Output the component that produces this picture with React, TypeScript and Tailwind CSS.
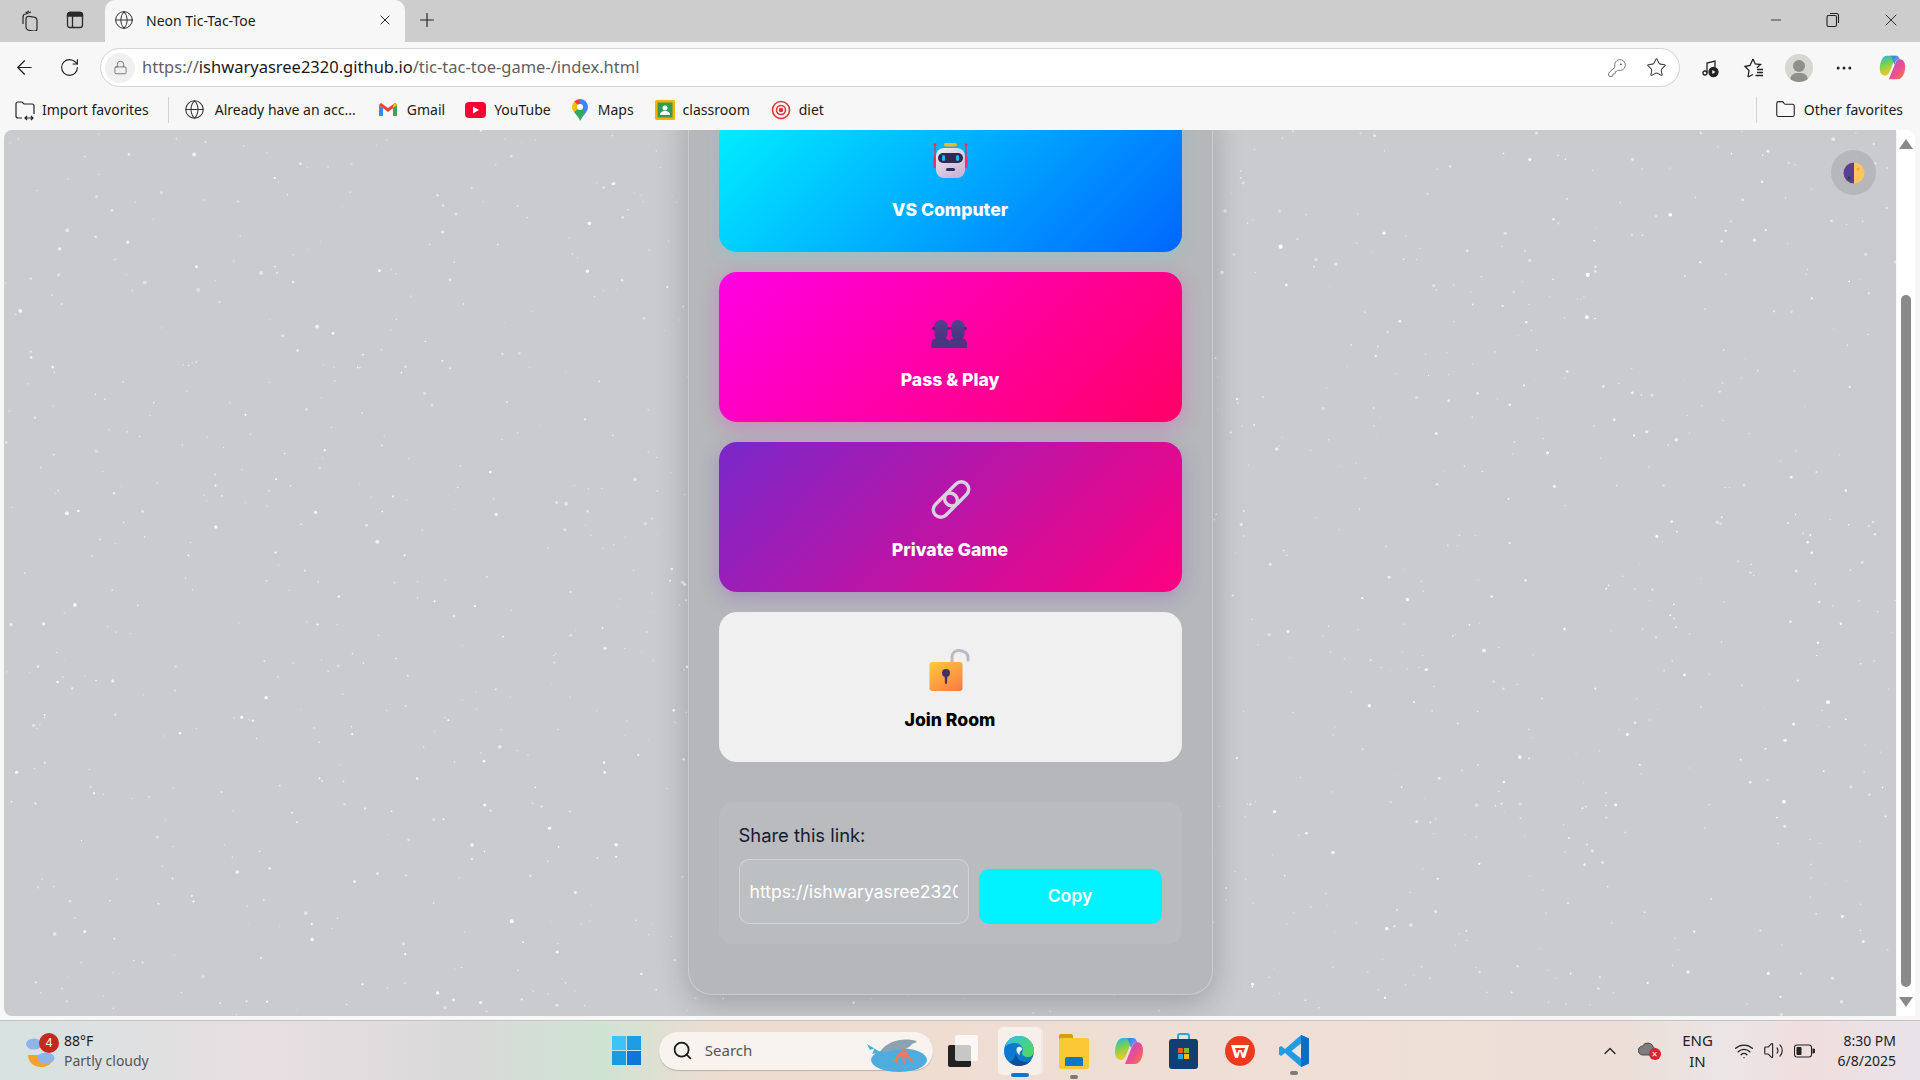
import { ArrowLeft, Globe, Lock, Minus, MoreHorizontal, Plus, RotateCw, Search, Star, X, ChevronUp, Wifi, Volume2, KeyRound, Folder } from 'lucide-react';

const CHROME_FONT = 'font-["Noto_Sans",sans-serif]';

// seeded so the speckles stay put between runs
const makeStars = (count: number) => {
  let seed = 4242;
  const rand = () => {
    seed = (seed * 16807) % 2147483647;
    return seed / 2147483647;
  };
  return Array.from({ length: count }, () => ({
    x: rand() * 1892,
    y: rand() * 890,
    r: 0.5 + rand() * rand() * 1.7,
    o: 0.35 + rand() * 0.65,
  }));
};

const stars = makeStars(1500);

function StarField() {
  return (
    <svg className="absolute inset-0 h-full w-full" viewBox="0 0 1892 890" preserveAspectRatio="none">
      {stars.map((s, i) => (
        <circle key={i} cx={s.x} cy={s.y} r={s.r} fill="#ffffff" opacity={s.o} />
      ))}
    </svg>
  );
}

function RobotIcon() {
  return (
    <svg width="48" height="48" viewBox="0 0 48 48">
      <defs>
        <linearGradient id="rb" x1="0" y1="0" x2="0.6" y2="1">
          <stop offset="0" stopColor="#f0edf2" />
          <stop offset="1" stopColor="#cbb6d6" />
        </linearGradient>
      </defs>
      <rect x="18" y="5" width="13" height="3.500" rx="1.700" fill="#f9b91e" />
      <line x1="9" y1="7" x2="9" y2="20" stroke="#e8265e" strokeWidth="1.200" />
      <line x1="40" y1="7" x2="40" y2="20" stroke="#e8265e" strokeWidth="1.200" />
      <circle cx="9" cy="6.500" r="1.600" fill="#f0305f" />
      <circle cx="40" cy="6.500" r="1.600" fill="#f0305f" />
      <rect x="7.500" y="18" width="3.500" height="12" rx="1.500" fill="#f0306a" />
      <rect x="38" y="18" width="3.500" height="12" rx="1.500" fill="#f0306a" />
      <rect x="10" y="10" width="29" height="30" rx="8" fill="url(#rb)" />
      <rect x="12" y="15" width="25" height="10" rx="5" fill="#2f2a55" />
      <rect x="16" y="17" width="3" height="6" rx="1.500" fill="#1fb6f5" />
      <rect x="30" y="17" width="3" height="6" rx="1.500" fill="#1fb6f5" />
      <rect x="20" y="30" width="9" height="3" rx="1.500" fill="#342c58" />
    </svg>
  );
}

function PeopleIcon() {
  return (
    <svg width="48" height="48" viewBox="0 0 48 48">
      <defs>
        <linearGradient id="pp" x1="0" y1="0" x2="0" y2="1">
          <stop offset="0" stopColor="#54408e" />
          <stop offset="1" stopColor="#47337e" />
        </linearGradient>
      </defs>
      <circle cx="8" cy="20.500" r="1.700" fill="#3e2a6e" />
      <circle cx="39" cy="20.500" r="1.700" fill="#3e2a6e" />
      <circle cx="22.500" cy="20.500" r="1.400" fill="#3e2a6e" />
      <circle cx="25.500" cy="20.500" r="1.400" fill="#3e2a6e" />
      <path d="M5.500 40v-4.500c0-3.500 3-5.500 6-5.500h6c3 0 5.500 1.500 6 4 .5-2.500 3-4 6-4h5.500c3 0 6 2 6 5.500V40z" fill="#4a3580" />
      <rect x="8.500" y="12" width="13" height="20" rx="6" fill="url(#pp)" />
      <rect x="25.500" y="12" width="13" height="20" rx="6" fill="url(#pp)" />
    </svg>
  );
}

function ChainIcon() {
  return (
    <svg width="48" height="48" viewBox="0 0 48 48">
      <g transform="translate(25 21.500) rotate(-45)" fill="none" stroke="#d8d2df" strokeWidth="3.400">
        <rect x="-22" y="-7.500" width="28" height="15" rx="7.500" />
        <rect x="-6" y="-7.500" width="28" height="15" rx="7.500" />
      </g>
    </svg>
  );
}

function LockIcon() {
  return (
    <svg width="48" height="48" viewBox="0 0 48 48">
      <defs>
        <linearGradient id="lk" x1="0.1" y1="0" x2="0.8" y2="1">
          <stop offset="0" stopColor="#fec83c" />
          <stop offset="1" stopColor="#fb7f45" />
        </linearGradient>
      </defs>
      <path d="M26 15V9c0-4 3-6.500 7-6.500s9 2.500 9 6.500v3" fill="none" stroke="#bdb8c6" strokeWidth="3" strokeLinecap="round" />
      <rect x="3.500" y="14" width="33" height="29" rx="3" fill="url(#lk)" />
      <circle cx="20" cy="25" r="4" fill="#3f3162" />
      <path d="M18.500 26h3l-0.500 9a1 1 0 0 1-2 0z" fill="#3f3162" />
    </svg>
  );
}

function ModeButton({ label, icon, className }: { label: string; icon: React.ReactNode; className: string }) {
  return (
    <button className={`flex h-[150px] w-full shrink-0 flex-col items-center gap-2.5 rounded-[18px] pt-9 ${className}`}>
      {icon}
      <span className='text-[17.600px] leading-[27px] font-extrabold font-["Inter",sans-serif]'>{label}</span>
    </button>
  );
}

function CopilotIcon({ size }: { size: number }) {
  return (
    <svg width={size} height={size} viewBox="0 0 32 32">
      <defs>
        <linearGradient id={`c1${size}`} x1="0" y1="0" x2="0.3" y2="1">
          <stop offset="0" stopColor="#1fb4ee" />
          <stop offset="0.5" stopColor="#7ed24a" />
          <stop offset="1" stopColor="#f5c52c" />
        </linearGradient>
        <linearGradient id={`c2${size}`} x1="0" y1="0" x2="1" y2="1">
          <stop offset="0" stopColor="#b04fe0" />
          <stop offset="0.6" stopColor="#f0508a" />
          <stop offset="1" stopColor="#f58a2c" />
        </linearGradient>
      </defs>
      <path d="M10 3h10l-6 15c-1.500 4-3 7-6 7-4 0-6-4-6-8C2 10 5 3 10 3z" fill={`url(#c1${size})`} />
      <path d="M22 29H12l6-15c1.500-4 3-7 6-7 4 0 6 4 6 8 0 7-3 14-8 14z" fill={`url(#c2${size})`} />
      <path d="M12 3h8c2 0 3 1 4 4-3 0-4.500 2-6 6l-3-8c-.5-1.300-1.500-2-3-2z" fill="#3b82f0" opacity="0.85" />
    </svg>
  );
}

function FolderPlainIcon() {
  return <Folder size={21} strokeWidth={1.25} className="text-[#222]" />;
}

function Bookmark({ icon, label, className }: { icon: React.ReactNode; label: string; className?: string }) {
  return (
    <div className={`flex items-center ${className ?? ''}`}>
      {icon}
      <span className="text-[14px] whitespace-nowrap text-[#1a1a1a]">{label}</span>
    </div>
  );
}

function ChromeBars() {
  return (
    <>
      {/* Tab strip */}
      <div className="flex h-[42px] shrink-0 items-center bg-[#cdcdcd]">
        <div className="flex items-center pb-[2px]">
          <svg width="22" height="22" viewBox="0 0 22 22" fill="none" stroke="#2a2a2a" strokeWidth="1.200" className="ml-[19px]">
            <rect x="7" y="6" width="11" height="14" rx="3" transform="skewY(8)" />
            <path d="M4 15V8c0-2 1-3 3-3l5-2" />
            <path d="M6.500 4 10 2" />
          </svg>
          <svg width="20" height="20" viewBox="0 0 20 20" fill="none" stroke="#2a2a2a" strokeWidth="1.300" className="ml-[24px]">
            <rect x="2.500" y="2.500" width="15" height="15" rx="2.500" />
            <path d="M2.500 6h15v-1a2.500 2.500 0 0 0-2.500-2.500H5A2.500 2.500 0 0 0 2.500 5z" fill="#2a2a2a" />
            <path d="M7.500 6v11.500" />
          </svg>
        </div>
        <div className="ml-[20px] flex h-full w-[300px] items-center rounded-t-[10px] bg-[#f7f7f7] pr-[12px] pb-[2px] pl-[9px]">
          <Globe size={20} strokeWidth={1.200} className="text-[#333]" />
          <span className="ml-[12px] flex-1 text-[14px] text-[#1a1a1a]">Neon Tic-Tac-Toe</span>
          <X size={16} strokeWidth={1.500} className="text-[#222]" />
        </div>
        <Plus size={22} strokeWidth={1.250} className="mb-[2px] ml-[11px] text-[#222]" />
        <div className="flex-1" />
        <div className="flex items-center pb-[2px]">
          <Minus size={16} strokeWidth={1.250} className="mr-[41px] text-[#222]" />
          <svg width="16" height="16" viewBox="0 0 16 16" fill="none" stroke="#222" strokeWidth="1.100" className="mr-[40px]">
            <rect x="2" y="3.500" width="9.500" height="11" rx="1.500" />
            <path d="M5 1.500h6.500a2 2 0 0 1 2 2V11" />
          </svg>
          <X size={20} strokeWidth={1.100} className="mr-[19px] text-[#222]" />
        </div>
      </div>

      {/* Address bar row */}
      <div className="flex h-[45px] shrink-0 items-center bg-[#f7f7f7] pt-[6px]">
        <ArrowLeft size={23} strokeWidth={1.300} className="ml-[13px] text-[#222]" />
        <RotateCw size={21} strokeWidth={1.300} className="ml-[23px] text-[#222]" />
        <div className="ml-[20px] flex h-[39px] w-[1580px] items-center rounded-full border border-[#d4d4d4] bg-white">
          <div className="ml-[4px] flex h-[30px] w-[30px] items-center justify-center rounded-full bg-[#f0f0f0]">
            <Lock size={15} strokeWidth={1.200} className="text-[#555]" />
          </div>
          <span className="ml-[7px] flex-1 text-[16.500px] text-[#5f5f5f]">
            https://<span className="text-[#1a1a1a]">ishwaryasree2320.github.io</span>/tic-tac-toe-game-/index.html
          </span>
          <KeyRound size={20} strokeWidth={1.100} className="mr-[19px] text-[#666]" />
          <Star size={21} strokeWidth={1.200} className="mr-[12px] text-[#444]" />
        </div>
        <svg width="20" height="20" viewBox="0 0 20 20" fill="none" stroke="#222" strokeWidth="1.300" className="ml-[20px]">
          <path d="M7 15V5l8-2v6" />
          <circle cx="5" cy="15" r="2" />
          <circle cx="13.500" cy="14" r="4.500" fill="#222" />
          <path d="M12.300 12v4l3-2z" fill="#fff" stroke="none" />
        </svg>
        <svg width="24" height="24" viewBox="0 0 24 24" fill="none" stroke="#222" strokeWidth="1.300" className="ml-[22px]">
          <path d="M11 3l2.300 5 5.200.5-3.500 3.200M6 21l1-6.500L3 10.500l5-1L11 3M6 21l5-2.500" />
          <path d="M15 13.500h6M15 16.500h6M13.500 19.500h7.500" />
        </svg>
        <div className="relative ml-[19px] h-[28px] w-[28px] overflow-hidden rounded-full bg-[#d6d6d2]">
          <div className="absolute top-[6px] left-[8px] h-[12px] w-[12px] rounded-full bg-[#8f8f8b]" />
          <div className="absolute top-[19px] left-[5px] h-[14px] w-[18px] rounded-full bg-[#8f8f8b]" />
        </div>
        <MoreHorizontal size={20} strokeWidth={1.600} className="ml-[21px] text-[#222]" />
        <div className="ml-[24px]">
          <CopilotIcon size={29} />
        </div>
      </div>

      {/* Favorites bar */}
      <div className={`flex h-[43px] shrink-0 items-center bg-[#f7f7f7] pt-[2px] pr-[17px] ${CHROME_FONT}`}>
        <Bookmark
          className="ml-[14px]"
          label="Import favorites"
          icon={
            <svg width="22" height="22" viewBox="0 0 22 22" fill="none" stroke="#222" strokeWidth="1.200" className="mr-[6px]">
              <path d="M2 17V5a2 2 0 0 1 2-2h4l2 2h8a2 2 0 0 1 2 2v8" />
              <path d="M2 17a2 2 0 0 0 2 2h4M11 19h8M13 17l-2 2 2 2M17 17l2 2-2 2" />
            </svg>
          }
        />
        <div className="ml-[19px] h-[26px] w-px bg-[#d4d4d4]" />
        <Bookmark className="ml-[15px]" label="Already have an acc..." icon={<Globe size={21} strokeWidth={1.200} className="mr-[10px] text-[#333]" />} />
        <Bookmark
          className="ml-[23px]"
          label="Gmail"
          icon={
            <svg width="18" height="14" viewBox="0 0 18 14" className="mr-[10px]">
              <path d="M0 2v11h4V5z" fill="#4285f4" />
              <path d="M14 5v8h4V2z" fill="#34a853" />
              <path d="M0 2l9 7 9-7-2-2-7 5-7-5z" fill="#ea4335" />
              <path d="M16 0l2 2-4 3V2z" fill="#fbbc04" />
            </svg>
          }
        />
        <Bookmark
          className="ml-[20px]"
          label="YouTube"
          icon={
            <svg width="21" height="16" viewBox="0 0 21 16" className="mr-[8px]">
              <rect width="21" height="16" rx="4" fill="#ff0033" />
              <path d="M8 4.500v7l6-3.500z" fill="#fff" />
            </svg>
          }
        />
        <Bookmark
          className="ml-[21px]"
          label="Maps"
          icon={
            <svg width="16" height="22" viewBox="0 0 16 22" className="mr-[10px]">
              <path d="M8 0a8 8 0 0 1 8 8c0 5-5 8-8 14z" fill="#4285f4" />
              <path d="M8 0a8 8 0 0 0-6 2.700L8 8z" fill="#ea4335" />
              <path d="M2 2.700A8 8 0 0 0 0 8c0 2 1 3.500 2 5l6-5z" fill="#fbbc04" />
              <path d="M2 13c2 3 5 5 6 9 1-4 3-6 5-9L8 8z" fill="#34a853" />
              <circle cx="8" cy="8" r="3" fill="#fff" />
            </svg>
          }
        />
        <Bookmark
          className="ml-[21px]"
          label="classroom"
          icon={
            <svg width="20" height="20" viewBox="0 0 20 20" className="mr-[8px]">
              <rect width="20" height="20" rx="1.500" fill="#f4b400" />
              <rect x="2.500" y="2.500" width="15" height="15" fill="#2f9e58" />
              <circle cx="10" cy="8" r="2.500" fill="#fff" />
              <path d="M5 15c0-3 2.500-4 5-4s5 1 5 4z" fill="#fff" />
            </svg>
          }
        />
        <Bookmark
          className="ml-[21px]"
          label="diet"
          icon={
            <svg width="20" height="20" viewBox="0 0 20 20" fill="none" stroke="#d93838" strokeWidth="1.600" className="mr-[8px]">
              <circle cx="10" cy="10" r="8.500" />
              <circle cx="10" cy="10" r="4.500" />
              <circle cx="10" cy="10" r="1.500" fill="#d93838" />
            </svg>
          }
        />
        <div className="flex-1" />
        <div className="mr-[18px] h-[26px] w-px bg-[#d4d4d4]" />
        <div className="mr-[8px]">
          <FolderPlainIcon />
        </div>
        <span className="text-[14px] whitespace-nowrap text-[#1a1a1a]">Other favorites</span>
      </div>
    </>
  );
}

function GamePage() {
  return (
    <div className="relative flex min-w-0 flex-1 flex-col items-center justify-end overflow-hidden rounded-tl-[8px] rounded-bl-[8px] bg-[#c9cbcf] pb-[21px]">
      <StarField />

      <div className="relative flex w-[525px] shrink-0 flex-col gap-5 rounded-[24px] border border-white/30 bg-[#b5b7ba] px-[30px] pb-[50px] shadow-[0_8px_32px_rgba(0,0,0,0.22)]">
        <ModeButton
          label="VS Computer"
          icon={<RobotIcon />}
          className="bg-[linear-gradient(135deg,#00f3ff,#0066ff)] text-white shadow-[0_5px_15px_rgba(0,243,255,0.15)]"
        />
        <ModeButton
          label="Pass & Play"
          icon={<PeopleIcon />}
          className="bg-[linear-gradient(135deg,#ff00e4,#ff0066)] text-white shadow-[0_5px_20px_rgba(255,0,200,0.25)]"
        />
        <ModeButton
          label="Private Game"
          icon={<ChainIcon />}
          className="bg-[linear-gradient(135deg,#7928ca,#ff0080)] text-white shadow-[0_5px_20px_rgba(121,40,202,0.25)]"
        />
        <ModeButton label="Join Room" icon={<LockIcon />} className="bg-[#f0f0f0] text-black" />

        <div className='mt-5 rounded-[14px] bg-[#b9bbbe] px-5 pt-5 pb-5 font-["Inter",sans-serif]'>
          <p className="mb-[11px] text-[18.400px] leading-[26px] text-[#1a1a2e]">Share this link:</p>
          <div className="flex items-end gap-2.5">
            <input
              readOnly
              value="https://ishwaryasree2320.github.io/tic-tac-toe-game-/index.html"
              className="h-[65px] w-[230px] rounded-[10px] border border-white/30 bg-[#bdc0c3] px-[10px] text-[17.600px] text-white outline-none"
            />
            <button className="h-[55px] w-[183px] rounded-[10px] bg-[#00f3ff] text-[17.600px] font-semibold text-white">Copy</button>
          </div>
        </div>
      </div>

      <div className="absolute top-[20px] right-[20px] flex h-[45px] w-[45px] items-center justify-center rounded-full bg-[#b5b7ba]">
        <svg width="22" height="22" viewBox="0 0 22 22">
          <circle cx="11" cy="11" r="10.500" fill="#fdc65c" />
          <path d="M11 .5a10.500 10.500 0 0 0 0 21z" fill="#5b3e8f" />
          <circle cx="15" cy="7" r="1.500" fill="#f0a93e" />
          <circle cx="6" cy="16" r="1.500" fill="#3f2a70" />
        </svg>
      </div>
    </div>
  );
}

function Scrollbar() {
  return (
    <div className="ml-px flex w-[18px] shrink-0 flex-col items-center rounded-tr-[8px] bg-white pt-[9px] pb-[9px]">
      <svg width="14" height="10" viewBox="0 0 14 10">
        <path d="M7 0l7 10H0z" fill="#8a8a8a" />
      </svg>
      <div className="mt-[146px] h-[692px] w-[10px] rounded-full bg-[#8a8a8a]" />
      <div className="flex-1" />
      <svg width="14" height="10" viewBox="0 0 14 10">
        <path d="M0 0h14L7 10z" fill="#8a8a8a" />
      </svg>
    </div>
  );
}

function Taskbar() {
  return (
    <div className={`flex h-[60px] shrink-0 items-center border-t border-[#c6c2bf] bg-[linear-gradient(90deg,#d6e2e0_0%,#e8dfe2_14%,#d9d9d9_24%,#cfe3d3_31%,#efdcd0_38%,#efdfd6_70%,#ecdfd8_85%,#ebe5e6_90%,#f0dede_94%,#e9e3e9_100%)] ${CHROME_FONT}`}>
      <div className="relative ml-[25px] h-[40px] w-[36px]">
        <svg width="36" height="40" viewBox="0 0 36 40" className="absolute top-0 left-0">
          <path d="M3 24c0 7 6 12 13 12 4 0 8-1 11-5-5 0-9-3-11-7z" fill="#f7a22c" />
          <ellipse cx="9" cy="13" rx="8" ry="5.500" fill="#8cb5ea" />
          <ellipse cx="21" cy="27" rx="8.500" ry="5.500" fill="#8cb5ea" />
        </svg>
        <div className="absolute top-[2px] left-[14px] flex h-[20px] w-[20px] items-center justify-center rounded-full bg-[#c4291d] text-[12px] text-white">4</div>
      </div>
      <div className="ml-[3px] flex flex-col text-[14px] leading-[20px]">
        <span className="text-[#1a1a1a]">88°F</span>
        <span className="text-[#555]">Partly cloudy</span>
      </div>

      <div className="ml-[463px]">
        <svg width="29" height="29" viewBox="0 0 29 29">
          <rect width="14" height="14" fill="#3cc4f5" />
          <rect x="15" width="14" height="14" fill="#1c9de4" />
          <rect y="15" width="14" height="14" fill="#1a9be2" />
          <rect x="15" y="15" width="14" height="14" fill="#0a78d4" />
        </svg>
      </div>

      <div className="ml-[18px] flex h-[38px] w-[274px] items-center rounded-full bg-[#f8f3ef] shadow-[0_1px_1px_rgba(0,0,0,0.2)]">
        <Search size={21} strokeWidth={2} className="ml-[13px] text-[#1a1a1a]" />
        <span className="ml-[12px] flex-1 text-[15px] text-[#555]">Search</span>
        <svg width="66" height="42" viewBox="0 0 66 42" className="mr-[3px]">
          <ellipse cx="35" cy="30" rx="28" ry="12" fill="#4eacdf" />
          <path d="M16 22c6-10 20-14 32-12 3 0 4 1 5 2l-5 2c-3 4-8 6-14 6-6 0-12 2-18 2z" fill="#8ba3b0" />
          <path d="M3 14l3 6 5-2-3 6 8-2z" fill="#3fb1d8" />
          <path d="M35 24c-3 2-3 6-1 10M39 24c0 4 0 7 2 10M43 24c2 3 3 6 6 8M37 24c-3 4-5 6-8 7" stroke="#ec7a5f" strokeWidth="2" fill="none" />
          <circle cx="40" cy="24" r="4" fill="#ec7a5f" />
        </svg>
      </div>

      <div className="relative ml-[15px] h-[32px] w-[30px]">
        <div className="absolute top-[10px] left-0 h-[22px] w-[23px] rounded-[2px] bg-[#222]" />
        <div className="absolute top-0 left-[7px] h-[26px] w-[23px] rounded-[2px] bg-white/75" />
      </div>

      <div className="relative ml-[20px] flex h-[48px] w-[43px] items-center justify-center rounded-[5px] bg-[#f6efea] shadow-[2px_0_0_#f2e8e1]">
        <svg width="30" height="30" viewBox="0 0 30 30">
          <defs>
            <linearGradient id="eg" x1="0" y1="0" x2="1" y2="0.6">
              <stop offset="0" stopColor="#2fc4e8" />
              <stop offset="1" stopColor="#4fd765" />
            </linearGradient>
          </defs>
          <circle cx="15" cy="15" r="15" fill="#0f78d0" />
          <path d="M1 11C3 4 9 0 15 0c9 0 15 7 15 15 0 4-3 6-6 6-4 0-6-2-6-4 0-1 1-2 1-3 0-3-3-7-8-7-4 0-8 1-10 4z" fill="url(#eg)" />
          <path d="M12 17c0 5 4 9 9 9 3 0 5-1 7-3-3 5-8 7-13 7-4 0-8-2-10-5 2 1 5 0 7-8z" fill="#0a4ea0" />
          <path d="M14 11c3-1 5 1 4 3-2 1-3 3-2 5-3-1-5-6-2-8z" fill="#f6efea" />
        </svg>
        <div className="absolute bottom-[-2px] left-[13px] h-[4px] w-[18px] rounded-full bg-[#0a78d4]" />
      </div>

      <div className="relative ml-[18px] h-[36px] w-[30px]">
        <div className="absolute top-[1px] left-0 h-[8px] w-[14px] rounded-t-[2px] bg-[#d99b0a]" />
        <div className="absolute top-[5px] left-0 h-[31px] w-[30px] rounded-[2px] bg-[#fbc935]" />
        <div className="absolute bottom-[3px] left-[6px] h-[9px] w-[18px] rounded-t-[2px] bg-[#0a78c8]" />
        <div className="absolute -bottom-[10px] left-[11px] h-[4px] w-[8px] rounded-full bg-[#7d7a78]" />
      </div>

      <div className="ml-[18px] flex h-[32px] w-[45px] justify-center">
        <CopilotIcon size={32} />
      </div>

      <div className="ml-[17px]">
        <svg width="29" height="36" viewBox="0 0 29 36">
          <path d="M9 7V3a2 2 0 0 1 2-2h7a2 2 0 0 1 2 2v4" fill="none" stroke="#1fa9dc" strokeWidth="2" />
          <rect y="6" width="29" height="30" rx="3" fill="#123f72" />
          <rect x="9" y="15" width="5" height="5" fill="#e8582a" />
          <rect x="15" y="15" width="5" height="5" fill="#7fba2a" />
          <rect x="9" y="21" width="5" height="5" fill="#1fa9ec" />
          <rect x="15" y="21" width="5" height="5" fill="#fbbc0a" />
        </svg>
      </div>

      <div className="ml-[27px]">
        <svg width="30" height="30" viewBox="0 0 30 30">
          <circle cx="15" cy="15" r="15" fill="#ee3b1f" />
          <path d="M6 9h18l-4 13h-3l-2-7-2 7h-3z" fill="#fff" />
          <path d="M10 12h10l-2 6-1.500-4h-3L12 18z" fill="#ee3b1f" />
        </svg>
      </div>

      <div className="relative ml-[24px]">
        <svg width="30" height="32" viewBox="0 0 30 32">
          <path d="M22 0l8 3.500v25L22 32 6 18l-4 3-2-1.500v-7L2 11l4 3z" fill="#1f9be8" />
          <path d="M22 8.500L12.500 16l9.500 7.500z" fill="#f2e4da" />
          <path d="M22 0l8 3.500v25L22 32z" fill="#0a6fc4" />
        </svg>
        <div className="absolute -bottom-[8px] left-[11px] h-[4px] w-[8px] rounded-full bg-[#7d7a78]" />
      </div>

      <div className="flex-1" />

      <ChevronUp size={20} strokeWidth={1.500} className="text-[#222]" />
      <div className="relative ml-[18px] h-[18px] w-[24px]">
        <svg width="20" height="14" viewBox="0 0 20 14" className="absolute top-0 left-0">
          <path d="M5 13a4.500 4.500 0 0 1-.5-9 6 6 0 0 1 11 1.500A3.800 3.800 0 0 1 15 13z" fill="#7f7d7d" stroke="#333" strokeWidth="0.800" />
        </svg>
        <div className="absolute top-[6px] left-[11px] flex h-[12px] w-[12px] items-center justify-center rounded-full bg-[#d9232e] text-[10px] leading-none text-white">×</div>
      </div>
      <div className="ml-[21px] flex w-[30px] flex-col items-center text-[15px] leading-[21px] text-[#222]">
        <span>ENG</span>
        <span>IN</span>
      </div>
      <Wifi size={20} strokeWidth={1.600} className="ml-[21px] text-[#222]" />
      <Volume2 size={21} strokeWidth={1.300} className="ml-[9px] text-[#222]" />
      <svg width="21" height="14" viewBox="0 0 21 14" fill="none" stroke="#222" strokeWidth="1.100" className="ml-[10px]">
        <rect x="0.500" y="1" width="17" height="12" rx="2.500" />
        <rect x="2.500" y="3" width="5" height="8" rx="1" fill="#222" stroke="none" />
        <path d="M19 5v4a2 2 0 0 0 0-4z" fill="#222" />
      </svg>
      <div className="mr-[24px] ml-[23px] flex flex-col items-end text-[14px] leading-[20px] text-[#222]">
        <span>8:30 PM</span>
        <span>6/8/2025</span>
      </div>
    </div>
  );
}

export default function App() {
  return (
    <div className={`flex h-screen w-full flex-col overflow-hidden bg-[#f7f7f7] ${CHROME_FONT}`}>
      <ChromeBars />
      <div className="flex min-h-0 flex-1 pr-[5px] pb-[4px] pl-[4px]">
        <GamePage />
        <Scrollbar />
      </div>
      <Taskbar />
    </div>
  );
}
